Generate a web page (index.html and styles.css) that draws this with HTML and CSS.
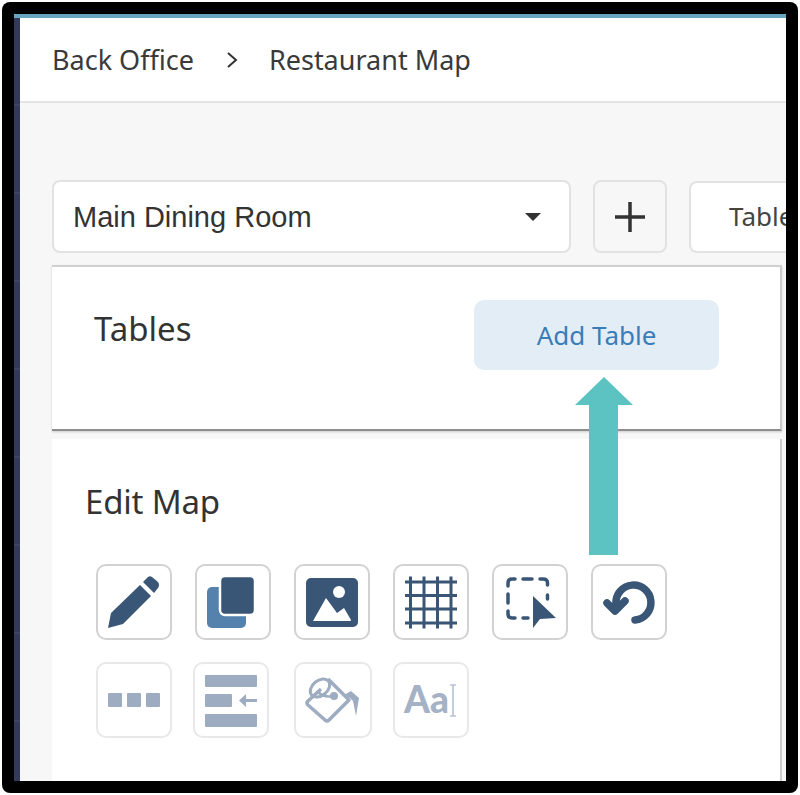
FILE: index.html
```html
<!DOCTYPE html>
<html lang="en">
<head>
  <meta charset="UTF-8">
  <title>Restaurant Map</title>
  <link rel="stylesheet" href="styles.css">
</head>
<body>

<div class="frame">
  <div class="screen">
    <div class="sidebar"></div>
    <div class="main">
      <div class="crumbs">
        <span>Back Office</span>
        <svg class="crumb-sep" viewBox="0 0 12 16"><path d="M2 1l8 7-8 7" /></svg>
        <span>Restaurant Map</span>
      </div>

      <div class="content">
        <div class="toolbar">
          <div class="select">
            <span>Main Dining Room</span>
            <i class="caret"></i>
          </div>
          <div class="plus">
            <svg viewBox="0 0 30 30"><path d="M15 0v30M0 15h30" /></svg>
          </div>
          <div class="tab"><span>Tables</span></div>
        </div>

        <div class="panel tables-panel">
          <h2>Tables</h2>
          <button class="add-btn">Add Table</button>
        </div>

        <div class="panel edit-panel">
          <h2>Edit Map</h2>
          <div class="tools">
            <div class="tool">
              <svg viewBox="0 0 76 76"><path d="M12 64l3-15 29-28 11 11-28 28z" /><path d="M47 18l5-5q2-1.500 4 0l6 5q2 3 0 6l-4 5z" /></svg>
            </div>
            <div class="tool">
              <svg viewBox="0 0 76 76"><rect class="light" x="12" y="23" width="39" height="41" rx="5" /><rect class="front" x="25" y="12" width="35" height="39" rx="5" /></svg>
            </div>
            <div class="tool">
              <svg viewBox="0 0 76 76"><rect x="12" y="14" width="52" height="49" rx="5" /><circle class="knock" cx="45" cy="28" r="6" /><path class="knock" d="M19 57l13-23 11 15 7-5 7 12q0 1-1 1z" /></svg>
            </div>
            <div class="tool">
              <svg viewBox="0 0 76 76"><path class="line" stroke-width="3" d="M17.500 12.500v52M31 12.500v52M44.500 12.500v52M58 12.500v52M12 18h52M12 31.500h52M12 45h52M12 59h52" /></svg>
            </div>
            <div class="tool">
              <svg viewBox="0 0 76 76"><path class="line" stroke-width="3.500" stroke-linecap="round" d="M16 22v-3q0-4 4-4h3M31 15h9M48 15h3q4.500 0 4.500 4v2M55.500 31v4M16 30v9M16 47v3q0 4 4 4h3M31 54h5" /><path d="M41 32l23 22-16 1-7 9z" /></svg>
            </div>
            <div class="tool">
              <svg viewBox="0 0 76 76"><path class="line" stroke-width="7.500" stroke-linecap="round" stroke-linejoin="round" d="M44 56A17.500 17.500 0 1 0 25 40M16 39l8 8 10-10" /></svg>
            </div>
          </div>
          <div class="tools off">
            <div class="tool">
              <svg viewBox="0 0 76 76"><rect x="12" y="31" width="14" height="14" rx="1" /><rect x="31" y="31" width="14" height="14" rx="1" /><rect x="50" y="31" width="14" height="14" rx="1" /></svg>
            </div>
            <div class="tool nudge">
              <svg viewBox="0 0 76 76"><rect x="12" y="13" width="52" height="12" rx="1" /><rect x="12" y="32" width="27" height="13" rx="1" /><rect x="12" y="52" width="52" height="13" rx="1" /><path d="M46 38.500l7-6.500v5h11v3H53v5z" /></svg>
            </div>
            <div class="tool wide">
              <svg viewBox="0 0 78 76"><path class="line" stroke-width="3.500" stroke-linejoin="round" d="M34 17l21 21-20 20q-2 2-4 0L14 43q-2-2 0-4l13-12" /><ellipse class="line" stroke-width="3" cx="26" cy="26" rx="11" ry="7.500" transform="rotate(-40 26 26)" /><path class="line" stroke-width="2.500" d="M24 30q6 6 16 4" /><circle cx="40" cy="34" r="4" /><path d="M50 33l7-4 8 7-3 18-3-15-3-3z" /></svg>
            </div>
            <div class="tool">
              <svg viewBox="0 0 76 76"><text class="aa" x="11" y="51">Aa</text><path class="line" stroke-width="1.200" d="M60 23v31M57 23h6M57 54h6" /></svg>
            </div>
          </div>
        </div>
      </div>
    </div>

    <svg class="callout" viewBox="0 0 58 178"><path d="M29 0l29 28H43v150H14V28H0z" /></svg>
  </div>
</div>

</body>
</html>
```

FILE: styles.css
```css
* { box-sizing: border-box; }
html, body { margin: 0; height: 100%; background: #fff; }
body { padding: 2px; font-family: "Noto Sans", Arial, sans-serif; color: #333; }

.frame { width: 796px; height: 791px; background: #000; border-radius: 8px; padding: 12px; }
.screen { position: relative; display: flex; height: 767px; overflow: hidden; border-top: 4px solid #67a5c1; }

.sidebar { width: 6px; flex: none; background: repeating-linear-gradient(#33395a 0 86px, #3f4563 86px 88px); }
.main { flex: 1; min-width: 0; display: flex; flex-direction: column; background: #f7f7f7; }

.crumbs { height: 85px; flex: none; display: flex; align-items: center; padding-left: 32px; background: #fff; border-bottom: 2px solid #e4e4e4; font-size: 27px; color: #3a3a3a; }
.crumb-sep { width: 12px; height: 16px; margin: 0 31px 0 32px; fill: none; stroke: #333; stroke-width: 2; }

.content { flex: 1; display: flex; flex-direction: column; padding: 77px 0 0 32px; min-height: 0; }

.toolbar { display: flex; gap: 22px; height: 73px; flex: none; margin-bottom: 12px; }
.select { width: 519px; display: flex; align-items: center; justify-content: space-between; padding: 1px 28px 0 19px; background: #fff; border: 2px solid #e2e2e2; border-radius: 8px; font-family: "Liberation Sans", Arial, sans-serif; font-size: 29px; }
.caret { width: 0; height: 0; border-left: 8px solid transparent; border-right: 8px solid transparent; border-top: 8px solid #333; }
.plus { width: 74px; display: flex; align-items: center; justify-content: center; border: 2px solid #e2e2e2; border-radius: 8px; }
.plus svg { width: 30px; height: 30px; fill: none; stroke: #333; stroke-width: 3.500; }
.tab { flex: 1; margin-top: 1px; padding: 0 0 0 38px; background: #fff; border: 2px solid #e2e2e2; border-right: 0; border-radius: 8px 0 0 8px; font-size: 26px; line-height: 66px; color: #444; overflow: hidden; white-space: nowrap; }

.panel { width: 730px; background: #fff; border-right: 2px solid #ccc; flex: none; }
.panel h2 { margin: 0; font-weight: 400; font-size: 33px; color: #333; }

.tables-panel { height: 166px; display: flex; align-items: flex-start; justify-content: space-between; padding: 33px 61px 0 42px; border-top: 2px solid #d0d0d0; border-bottom: 2px solid #8e8e8e; margin-bottom: 8px; box-shadow: 0 1px 2px #ccc; }
.tables-panel h2 { line-height: 60px; margin-top: -1px; }
.add-btn { width: 245px; height: 70px; border: 0; border-radius: 10px; background: #e3edf6; color: #3a7cb8; font: 400 26px "Noto Sans", Arial, sans-serif; }

.edit-panel { flex: 1; padding: 38px 0 0 33px; }
.edit-panel h2 { line-height: 50px; margin-bottom: 37px; letter-spacing: -0.2px; }

.tools { display: flex; gap: 23px; margin: 0 0 22px 10.500px; }
.tool { width: 76px; height: 76px; flex: none; background: #fff; border: 2px solid #d2d2d2; border-radius: 10px; }
.tool svg { display: block; margin: -2px; width: 76px; height: 76px; fill: #3a5676; }
.tool .light { fill: #5581ad; }
.tool .front { stroke: #fff; stroke-width: 2.500; }
.tool .knock { fill: #fff; }
.tool .line { fill: none; stroke: #3a5676; }

.off .tool { border-color: #e8e8e8; }
.off .tool svg { fill: #9eacc1; }
.off .tool .line { stroke: #9eacc1; }
.nudge { margin: 0 2px 0 -2px; }
.wide { width: 78px; margin-right: -2px; }
.wide svg { width: 78px; }
.aa { font-family: "Lato", "Noto Sans", sans-serif; font-weight: 900; font-size: 37px; fill: #a5b2c6; }

.callout { position: absolute; left: 561px; top: 359px; width: 58px; height: 178px; fill: #5cc3c2; }
```
